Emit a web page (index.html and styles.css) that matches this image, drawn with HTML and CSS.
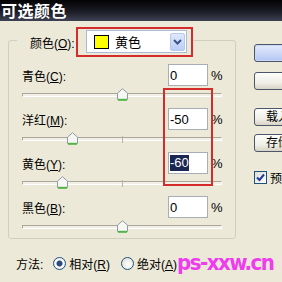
FILE: index.html
```html
<!DOCTYPE html>
<html lang="zh-CN">
<head>
<meta charset="utf-8">
<title>可选颜色</title>
<link rel="stylesheet" href="styles.css">
</head>
<body>
<div class="dialog">
  <div class="titlebar">可选颜色</div>
  <div class="body">
    <div class="left">
      <div class="group">
        <div class="group-head">
          <span class="head-lbl">颜色(<u>O</u>):</span>
          <span class="mark">
            <span class="combo">
              <span class="swatch"></span>
              <span class="combo-text">黄色</span>
              <span class="combo-btn"><svg width="9" height="6" viewBox="0 0 9 6"><path d="M1 1 L4.5 4.5 L8 1" fill="none" stroke="#3d5687" stroke-width="2"/></svg></span>
            </span>
          </span>
        </div>

        <div class="channels">
          <div class="channel">
            <div class="row"><span class="name">青色(<u>C</u>):</span><span class="field">0</span><span class="pct">%</span></div>
            <div class="slider"><div class="track"></div><span class="thumb" style="left:50%"><svg width="11" height="13" viewBox="0 0 11 13"><path d="M5.5 0.7 L10.5 5.2 V11.5 H0.5 V5.2 Z" fill="#f6f6f2" stroke="#8f9aa6"/><path d="M1 11.8 H10" stroke="#4fb548" stroke-width="2"/></svg></span></div>
          </div>
          <div class="channel">
            <div class="row"><span class="name">洋红(<u>M</u>):</span><span class="field">-50</span><span class="pct">%</span></div>
            <div class="slider"><div class="track"></div><span class="thumb" style="left:25%"><svg width="11" height="13" viewBox="0 0 11 13"><path d="M5.5 0.7 L10.5 5.2 V11.5 H0.5 V5.2 Z" fill="#f6f6f2" stroke="#8f9aa6"/><path d="M1 11.8 H10" stroke="#4fb548" stroke-width="2"/></svg></span></div>
          </div>
          <div class="channel">
            <div class="row"><span class="name">黄色(<u>Y</u>):</span><span class="field"><span class="sel">-60</span></span><span class="pct">%</span></div>
            <div class="slider"><div class="track"></div><span class="thumb" style="left:20%"><svg width="11" height="13" viewBox="0 0 11 13"><path d="M5.5 0.7 L10.5 5.2 V11.5 H0.5 V5.2 Z" fill="#f6f6f2" stroke="#8f9aa6"/><path d="M1 11.8 H10" stroke="#4fb548" stroke-width="2"/></svg></span></div>
          </div>
          <div class="channel">
            <div class="row"><span class="name">黑色(<u>B</u>):</span><span class="field">0</span><span class="pct">%</span></div>
            <div class="slider"><div class="track"></div><span class="thumb" style="left:50%"><svg width="11" height="13" viewBox="0 0 11 13"><path d="M5.5 0.7 L10.5 5.2 V11.5 H0.5 V5.2 Z" fill="#f6f6f2" stroke="#8f9aa6"/><path d="M1 11.8 H10" stroke="#4fb548" stroke-width="2"/></svg></span></div>
          </div>
        </div>
      </div>

      <div class="method">
        <span>方法:</span>
        <span class="radio checked"></span><span class="opt">相对(<u>R</u>)</span>
        <span class="radio"></span><span class="opt">绝对(<u>A</u>)</span>
      </div>
    </div>

    <div class="side">
      <div class="btn default">好</div>
      <div class="btn cancel">取消</div>
      <div class="btn file load">载入(<u>L</u>)...</div>
      <div class="btn file save">存储(<u>S</u>)...</div>
      <div class="check"><span class="box"><svg width="9" height="9" viewBox="0 0 9 9"><path d="M1 4.5 L3.5 7 L8 1.5" fill="none" stroke="#21399c" stroke-width="2"/></svg></span><span>预览(<u>P</u>)</span></div>
    </div>
  </div>

  <div class="mark-values"></div>
  <div class="watermark">ps-xxw.cn</div>
</div>
</body>
</html>
```

FILE: styles.css
```css
* {
  box-sizing: border-box;
}
html, body {
  margin: 0;
  height: 100%;
}
body {
  background: #ece9d8;
  font-family: "Liberation Sans", "Noto Sans CJK SC", sans-serif;
  font-size: 12px;
  color: #000;
  overflow: hidden;
}
.dialog {
  position: relative;
  width: 282px;
  height: 282px;
  overflow: hidden;
}
.titlebar {
  height: 21px;
  padding-left: 1px;
  background: linear-gradient(#030305, #1b1c25 55%, #3e4153);
  color: #fff;
  font-family: "Noto Sans CJK SC", sans-serif;
  font-weight: bold;
  font-size: 16px;
  line-height: 21px;
  letter-spacing: 0.5px;
  white-space: nowrap;
}
.body {
  display: flex;
}
.left {
  flex: none;
  width: 236px;
  padding-left: 8px;
  margin-top: 19px;
}
.side {
  flex: none;
  width: 80px;
  margin-left: 18px;
  padding-top: 23px;
}

/* group box */
.group {
  border: 1px solid #d0d0bf;
  border-radius: 3px;
  padding: 0 13px 3px 13px;
}
.group-head {
  display: flex;
  align-items: center;
  width: max-content;
  margin: -14px 0 0 -5px;
  padding-left: 13px;
  background: #ece9d8;
}
.head-lbl {
  width: 46px;
}
.mark {
  display: block;
  border: 2px solid #d42b2b;
  padding: 1px 4px 2px 8px;
}
.combo {
  display: flex;
  align-items: center;
  width: 101px;
  height: 23px;
  border: 1px solid #a9bbd6;
  background: #fff;
  padding: 0 1px 0 7px;
}
.swatch {
  width: 15px;
  height: 14px;
  background: #ffff00;
  border: 1px solid #000;
}
.combo-text {
  flex: 1;
  margin-left: 6px;
  font-size: 13px;
}
.combo-btn {
  display: flex;
  align-items: center;
  justify-content: center;
  width: 15px;
  height: 18px;
  border: 1px solid #b7c8ef;
  border-radius: 2px;
  background: linear-gradient(#dfe8fc, #bccdf6);
}

/* channels */
.channels {
  display: flex;
  flex-direction: column;
  gap: 5px;
  margin-top: 7px;
}
.row {
  display: flex;
  align-items: center;
  height: 22px;
}
.name {
  flex: 1;
}
.field {
  display: flex;
  align-items: center;
  width: 40px;
  height: 22px;
  border: 1px solid #a9aeb6;
  background: #fff;
  padding-left: 1px;
  font-size: 13px;
}
.sel {
  background: #1b2652;
  color: #fff;
  line-height: 16px;
}
.pct {
  width: 11px;
  margin-left: 3px;
  font-size: 13px;
}
.slider {
  position: relative;
  height: 17px;
  padding-top: 7px;
}
.track {
  position: relative;
  height: 4px;
  border: 1px solid;
  border-color: #a9a799 #fff #fff #a9a799;
  border-radius: 1px;
  background: #f1efe6;
}
.track::after {
  content: "";
  position: absolute;
  left: 50%;
  top: -2px;
  width: 1px;
  height: 7px;
  background: #b8b5a7;
}
.thumb {
  position: absolute;
  top: 2px;
  margin-left: -5px;
  width: 11px;
  height: 13px;
}
.thumb svg {
  display: block;
}

/* method */
.method {
  display: flex;
  align-items: center;
  height: 16px;
  margin-top: 16px;
  padding-left: 8px;
}
.radio {
  display: inline-block;
  width: 13px;
  height: 13px;
  margin-left: 10px;
  margin-right: 3px;
  border: 1px solid #1c5180;
  border-radius: 50%;
  background: radial-gradient(circle at 60% 60%, #fff, #dcd9cd);
}
.radio.checked {
  background: radial-gradient(circle, #2c4b86 0 2.5px, #8fa0c0 3px, #fff 3.5px, #dcd9cd);
}
.opt + .radio {
  margin-left: 11px;
}

/* side buttons */
.btn {
  width: 80px;
  height: 18px;
  border: 1px solid #4c566b;
  border-radius: 3px;
  background: linear-gradient(#fdfdfb, #f0efe8 60%, #d8d4c6);
  line-height: 16px;
  text-align: center;
  white-space: nowrap;
}
.btn.default {
  background: linear-gradient(#e4eafb, #c7d5f6 60%, #b3c6f2);
  box-shadow: inset 0 0 0 1px #c9d8f8;
}
.btn.cancel {
  margin-top: 10px;
}
.btn.file {
  text-align: left;
  padding-left: 11px;
}
.btn.load {
  margin-top: 18px;
}
.btn.save {
  margin-top: 8px;
}
.check {
  display: flex;
  align-items: center;
  margin-top: 17px;
  white-space: nowrap;
}
.box {
  display: flex;
  align-items: center;
  justify-content: center;
  width: 13px;
  height: 13px;
  margin-right: 3px;
  border: 1px solid #1c5180;
  background: linear-gradient(135deg, #dcdbd3, #fff);
}

/* annotation over the values */
.mark-values {
  position: absolute;
  left: 163px;
  top: 88px;
  width: 50px;
  height: 98px;
  border: 2px solid #d42b2b;
}
.watermark {
  position: absolute;
  left: 177px;
  top: 250px;
  color: #ee3cee;
  font-family: "DejaVu Sans Condensed", "DejaVu Sans", sans-serif;
  font-weight: bold;
  font-size: 22px;
  letter-spacing: -1.5px;
  white-space: nowrap;
}
```
